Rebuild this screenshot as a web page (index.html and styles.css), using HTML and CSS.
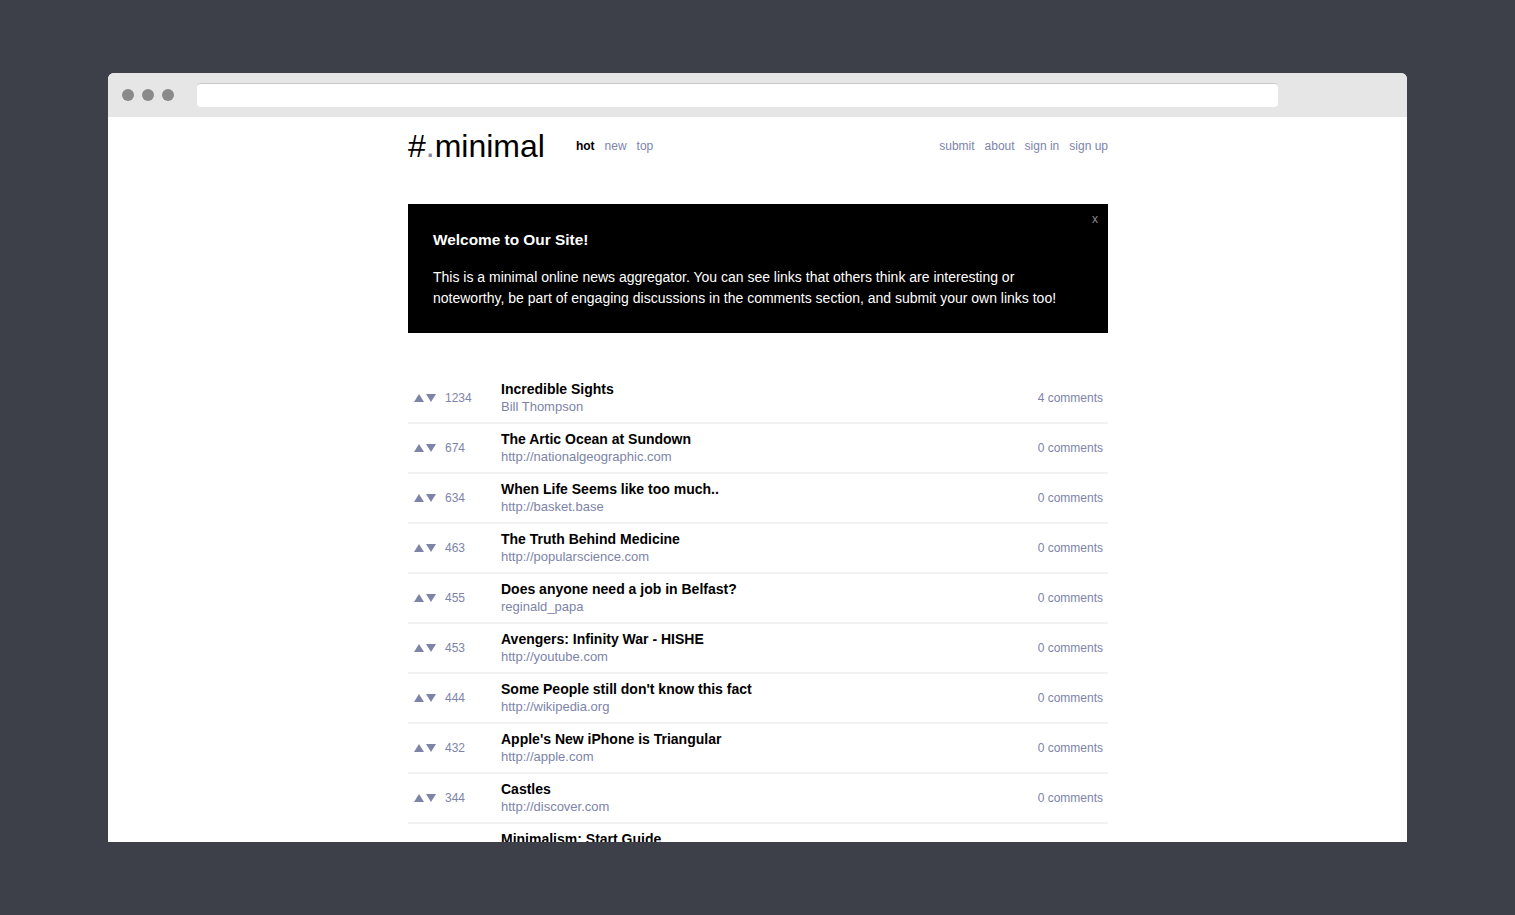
FILE: index.html
```html
<!DOCTYPE html>
<html lang="en">
<head>
<meta charset="utf-8">
<title>#.minimal</title>
<link rel="stylesheet" href="styles.css">
</head>
<body>
<div class="window">
  <div class="titlebar">
    <div class="dots"><span class="dot"></span><span class="dot"></span><span class="dot"></span></div>
    <div class="address"></div>
  </div>
  <div class="page">
    <div class="container">
      <header class="header">
        <div class="logo">#<span class="logo-dot">.</span>minimal</div>
        <nav class="nav">
          <a class="nav-link active">hot</a>
          <a class="nav-link">new</a>
          <a class="nav-link">top</a>
        </nav>
        <nav class="nav nav-right">
          <a class="nav-link">submit</a>
          <a class="nav-link">about</a>
          <a class="nav-link">sign in</a>
          <a class="nav-link">sign up</a>
        </nav>
      </header>

      <section class="banner">
        <span class="banner-close">x</span>
        <h2 class="banner-title">Welcome to Our Site!</h2>
        <p class="banner-text">This is a minimal online news aggregator. You can see links that others think are interesting or noteworthy, be part of engaging discussions in the comments section, and submit your own links too!</p>
      </section>

      <ul class="posts">
        <li class="post">
          <div class="vote"><span class="arrows"><svg class="arrow" viewBox="0 0 10 10"><path d="M5 1 L10 9 L0 9 Z"/></svg><svg class="arrow" viewBox="0 0 10 10"><path d="M0 1 L10 1 L5 9 Z"/></svg></span><span class="score">1234</span></div>
          <div class="post-main"><div class="post-title">Incredible Sights</div><div class="post-sub">Bill Thompson</div></div>
          <div class="post-comments">4 comments</div>
        </li>
        <li class="post">
          <div class="vote"><span class="arrows"><svg class="arrow" viewBox="0 0 10 10"><path d="M5 1 L10 9 L0 9 Z"/></svg><svg class="arrow" viewBox="0 0 10 10"><path d="M0 1 L10 1 L5 9 Z"/></svg></span><span class="score">674</span></div>
          <div class="post-main"><div class="post-title">The Artic Ocean at Sundown</div><div class="post-sub">http://nationalgeographic.com</div></div>
          <div class="post-comments">0 comments</div>
        </li>
        <li class="post">
          <div class="vote"><span class="arrows"><svg class="arrow" viewBox="0 0 10 10"><path d="M5 1 L10 9 L0 9 Z"/></svg><svg class="arrow" viewBox="0 0 10 10"><path d="M0 1 L10 1 L5 9 Z"/></svg></span><span class="score">634</span></div>
          <div class="post-main"><div class="post-title">When Life Seems like too much..</div><div class="post-sub">http://basket.base</div></div>
          <div class="post-comments">0 comments</div>
        </li>
        <li class="post">
          <div class="vote"><span class="arrows"><svg class="arrow" viewBox="0 0 10 10"><path d="M5 1 L10 9 L0 9 Z"/></svg><svg class="arrow" viewBox="0 0 10 10"><path d="M0 1 L10 1 L5 9 Z"/></svg></span><span class="score">463</span></div>
          <div class="post-main"><div class="post-title">The Truth Behind Medicine</div><div class="post-sub">http://popularscience.com</div></div>
          <div class="post-comments">0 comments</div>
        </li>
        <li class="post">
          <div class="vote"><span class="arrows"><svg class="arrow" viewBox="0 0 10 10"><path d="M5 1 L10 9 L0 9 Z"/></svg><svg class="arrow" viewBox="0 0 10 10"><path d="M0 1 L10 1 L5 9 Z"/></svg></span><span class="score">455</span></div>
          <div class="post-main"><div class="post-title">Does anyone need a job in Belfast?</div><div class="post-sub">reginald_papa</div></div>
          <div class="post-comments">0 comments</div>
        </li>
        <li class="post">
          <div class="vote"><span class="arrows"><svg class="arrow" viewBox="0 0 10 10"><path d="M5 1 L10 9 L0 9 Z"/></svg><svg class="arrow" viewBox="0 0 10 10"><path d="M0 1 L10 1 L5 9 Z"/></svg></span><span class="score">453</span></div>
          <div class="post-main"><div class="post-title">Avengers: Infinity War - HISHE</div><div class="post-sub">http://youtube.com</div></div>
          <div class="post-comments">0 comments</div>
        </li>
        <li class="post">
          <div class="vote"><span class="arrows"><svg class="arrow" viewBox="0 0 10 10"><path d="M5 1 L10 9 L0 9 Z"/></svg><svg class="arrow" viewBox="0 0 10 10"><path d="M0 1 L10 1 L5 9 Z"/></svg></span><span class="score">444</span></div>
          <div class="post-main"><div class="post-title">Some People still don't know this fact</div><div class="post-sub">http://wikipedia.org</div></div>
          <div class="post-comments">0 comments</div>
        </li>
        <li class="post">
          <div class="vote"><span class="arrows"><svg class="arrow" viewBox="0 0 10 10"><path d="M5 1 L10 9 L0 9 Z"/></svg><svg class="arrow" viewBox="0 0 10 10"><path d="M0 1 L10 1 L5 9 Z"/></svg></span><span class="score">432</span></div>
          <div class="post-main"><div class="post-title">Apple's New iPhone is Triangular</div><div class="post-sub">http://apple.com</div></div>
          <div class="post-comments">0 comments</div>
        </li>
        <li class="post">
          <div class="vote"><span class="arrows"><svg class="arrow" viewBox="0 0 10 10"><path d="M5 1 L10 9 L0 9 Z"/></svg><svg class="arrow" viewBox="0 0 10 10"><path d="M0 1 L10 1 L5 9 Z"/></svg></span><span class="score">344</span></div>
          <div class="post-main"><div class="post-title">Castles</div><div class="post-sub">http://discover.com</div></div>
          <div class="post-comments">0 comments</div>
        </li>
        <li class="post">
          <div class="vote"><span class="arrows"><svg class="arrow" viewBox="0 0 10 10"><path d="M5 1 L10 9 L0 9 Z"/></svg><svg class="arrow" viewBox="0 0 10 10"><path d="M0 1 L10 1 L5 9 Z"/></svg></span><span class="score">321</span></div>
          <div class="post-main"><div class="post-title">Minimalism: Start Guide</div><div class="post-sub">http://minimalism.com</div></div>
          <div class="post-comments">0 comments</div>
        </li>
      </ul>
    </div>
  </div>
</div>
</body>
</html>
```

FILE: styles.css
```css
* { box-sizing: border-box; }

html, body {
  margin: 0;
  padding: 0;
}

body {
  background: #3d4049;
  padding: 73px 108px;
  font-family: "Liberation Sans", Arial, Helvetica, sans-serif;
  height: 915px;
  overflow: hidden;
}

.window {
  height: 769px;
  background: #ffffff;
  border-radius: 6px 6px 0 0;
  overflow: hidden;
  display: flex;
  flex-direction: column;
}

.titlebar {
  height: 44px;
  flex: 0 0 44px;
  background: #e6e6e6;
  display: flex;
  align-items: center;
  padding-left: 14px;
}

.dots {
  display: flex;
  gap: 8px;
}

.dot {
  width: 12px;
  height: 12px;
  border-radius: 50%;
  background: #8a8a8a;
}

.address {
  margin-left: 23px;
  width: 1081px;
  height: 24px;
  background: #ffffff;
  border-radius: 4px;
  border-top: 1px solid #c9c9c9;
}

.page {
  flex: 1;
  overflow: hidden;
  padding-left: 1px;
}

.container {
  width: 700px;
  margin: 0 auto;
}

.header {
  display: flex;
  align-items: center;
  padding-top: 13px;
  height: 45px;
}

.logo {
  font-size: 32px;
  line-height: 32px;
  color: #000;
}

.logo-dot {
  color: #7d84a8;
}

.nav {
  display: flex;
  gap: 10px;
  margin-left: 31px;
  font-size: 12px;
}

.nav-right {
  margin-left: auto;
}

.nav-link {
  color: #7d84a8;
  text-decoration: none;
}

.nav-link.active {
  color: #000;
  font-weight: bold;
}

.banner {
  position: relative;
  margin-top: 42px;
  background: #000;
  color: #fff;
  padding: 26px 25px 23px 25px;
  height: 129px;
}

.banner-close {
  position: absolute;
  top: 8px;
  right: 10px;
  font-size: 12px;
  color: #8a8a8a;
  line-height: 14px;
}

.banner-title {
  margin: 0;
  font-size: 15.4px;
  line-height: 20px;
  font-weight: bold;
}

.banner-text {
  margin: 17px 0 0 0;
  font-size: 14px;
  line-height: 21px;
}

.posts {
  list-style: none;
  margin: 41px 0 0 0;
  padding: 0;
}

.post {
  height: 50px;
  display: flex;
  align-items: center;
  border-bottom: 2px solid #f2f2f2;
}

.vote {
  width: 93px;
  flex: 0 0 93px;
  display: flex;
  align-items: center;
  padding-left: 6px;
  color: #7d84a8;
  font-size: 12px;
}

.arrows {
  display: flex;
  gap: 2px;
  width: 31px;
}

.arrow {
  width: 10px;
  height: 10px;
  fill: #7d84a8;
}

.post-main {
  flex: 1;
}

.post-title {
  font-size: 14px;
  line-height: 17px;
  font-weight: bold;
  color: #000;
}

.post-sub {
  font-size: 13px;
  line-height: 17px;
  color: #7d84a8;
}

.post-comments {
  font-size: 12px;
  color: #7d84a8;
  padding-right: 5px;
}
```
